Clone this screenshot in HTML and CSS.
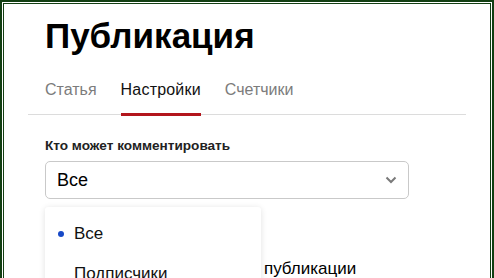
FILE: index.html
```html
<!DOCTYPE html>
<html lang="ru">
<head>
<meta charset="utf-8">
<link rel="stylesheet" href="styles.css">
</head>
<body>
<div class="frame">
  <div class="inner">
    <h1 class="title">Публикация</h1>
    <nav class="tabs">
      <a class="tab">Статья</a>
      <a class="tab active">Настройки</a>
      <a class="tab">Счетчики</a>
    </nav>
    <section class="field">
      <div class="label">Кто может комментировать</div>
      <div class="select">
        <span class="select-value">Все</span>
        <svg class="chevron" width="12" height="8" viewBox="0 0 12 8"><path d="M1.5 1.5 L6 6 L10.5 1.5" fill="none" stroke="#7a7a7a" stroke-width="2"/></svg>
      </div>
      <div class="dropdown-wrap">
        <ul class="dropdown">
          <li class="option selected">Все</li>
          <li class="option">Подписчики</li>
        </ul>
      </div>
      <p class="behind">Разрешить комментарии к публикации</p>
    </section>
  </div>
</div>
</body>
</html>
```
FILE: styles.css
```css
html, body {
  margin: 0;
  padding: 0;
  background: #fff;
}
body {
  font-family: "Liberation Sans", Arial, sans-serif;
  color: #000;
  overflow: hidden;
  height: 278px;
}
.frame {
  border: solid #133f13;
  border-width: 2px 2px 0 2px;
  padding: 1px 1px 0 1px;
  height: 300px;
}
.inner {
  border: solid #133f13;
  border-width: 1px 1px 0 1px;
  height: 300px;
  padding: 0 24px 0 24px;
}
.title {
  margin: 10px 0 0 17px;
  font-size: 35px;
  line-height: 44px;
  font-weight: 700;
  letter-spacing: 0;
}
.tabs {
  display: flex;
  gap: 24px;
  margin-top: 22px;
  padding-left: 17px;
  border-bottom: 1px solid #dcdcdc;
}
.tab {
  font-size: 16px;
  line-height: 20px;
  color: #7c7c7c;
  padding-bottom: 13px;
  border-bottom: 3px solid transparent;
  margin-bottom: -2px;
}
.tab.active {
  color: #111;
  border-bottom-color: #b3161c;
  letter-spacing: 0.2px;
}
.field {
  padding-left: 17px;
  position: relative;
  margin-top: 22px;
}
.label {
  font-size: 13.6px;
  line-height: 18px;
  font-weight: 700;
  color: #222;
}
.select {
  margin-top: 6px;
  width: 364px;
  height: 38px;
  box-sizing: border-box;
  border: 1px solid #c9c9c9;
  border-radius: 5px;
  display: flex;
  align-items: center;
  justify-content: space-between;
  padding: 0 11px 0 11px;
}
.select-value {
  font-size: 18px;
}
.chevron {
  display: block;
}
.dropdown-wrap {
  position: absolute;
  left: 17px;
  top: 70px;
  z-index: 2;
}
.dropdown {
  list-style: none;
  margin: 0;
  padding: 7px 0;
  width: 216px;
  background: #fff;
  box-shadow: 0 1px 6px rgba(0,0,0,0.12);
  border-radius: 3px;
}
.option {
  font-size: 17px;
  line-height: 20px;
  padding: 10px 0 10px 29px;
  position: relative;
  color: #111;
}
.option.selected::before {
  content: "";
  position: absolute;
  left: 13px;
  top: 17px;
  width: 6px;
  height: 6px;
  border-radius: 50%;
  background: #1749c7;
}
.behind {
  font-size: 17px;
  margin: 59px 0 0 0;
  line-height: 22px;
  word-spacing: 2px;
}
```
